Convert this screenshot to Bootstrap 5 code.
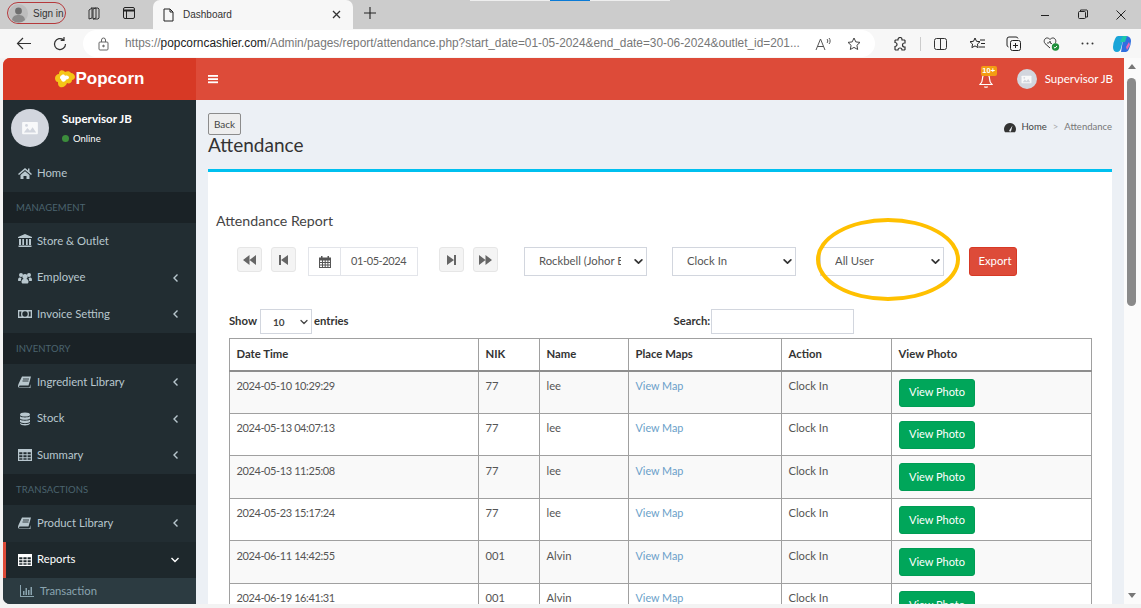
<!DOCTYPE html>
<html lang="en">
<head>
<meta charset="utf-8">
<title>Dashboard</title>
<link href="https://cdn.jsdelivr.net/npm/bootstrap@5.3.0/dist/css/bootstrap.min.css" rel="stylesheet">
<style>
html,body{height:608px;overflow:hidden}
body{font-family:"Lato","Liberation Sans",sans-serif;font-size:11.5px;color:#444;background:#f3f3f3;width:1141px;position:relative}
svg{display:block;flex:none}
/* browser chrome */
.tabstrip{height:29px;background:#ccc;display:flex;align-items:flex-start;font-family:"Liberation Sans",sans-serif;color:#333}
.signin{margin:2px 0 0 7px;width:59px;height:22px;border:1px solid #b5393c;border-radius:11px;display:flex;align-items:center;gap:5px;padding-left:1px;font-size:10px;white-space:nowrap}
.stripic{margin:6px 0 0 20px}
.stripic2{margin:6px 0 0 21px}
.tabitem{margin-left:17px;width:200px;height:29px;background:#f7f7f7;border-radius:7px 7px 0 0;display:flex;align-items:center;padding:0 12px 0 10px;font-size:10px;gap:9px}
.tabplus{margin:7px 0 0 11px}
.winctl{margin-left:auto;display:flex;gap:27px;padding:8px 15px 0 0}
.toolbar{height:29px;background:#f7f7f7;display:flex;align-items:center;font-family:"Liberation Sans",sans-serif}
.addr{margin-left:16px;width:792px;height:27px;background:#fff;border-radius:14px;display:flex;align-items:center;padding:0 14px 0 15px;font-size:11.86px;color:#777;white-space:nowrap}
.addr b{font-weight:400;color:#222}
.tool-right{display:flex;align-items:center;gap:21px;margin-left:18px}
.sep{width:1px;height:14px;background:#ccc;margin:0 -8.500px}
/* app */
.appwin{height:546px;margin-left:3px;display:flex;flex-direction:column;overflow:hidden;border-radius:7px 0 0 7px;position:relative}
.apphead{height:42px;display:flex;flex:none;background:#dd4b39;color:#fff;margin-right:17px}
.logo{width:193px;background:#d73925;display:flex;align-items:center;justify-content:center;font:700 17px "Liberation Sans",sans-serif;gap:0}
.burger{margin:16px 0 0 12px}
.headr{margin-left:auto;display:flex;align-items:center;padding-right:11px;position:relative;font-size:11.5px}
.bellwrap{position:relative;width:18px;height:42px;margin-right:20px}
.bellwrap svg{position:absolute;left:0;top:15px}
.bellbadge{position:absolute;left:2px;top:8px;width:16px;height:10px;background:#f39c12;border-radius:2px;font:700 7.5px/10px "Liberation Sans",sans-serif;text-align:center}
.av{border-radius:50%;background:#d2d6de;display:flex;align-items:center;justify-content:center}
.appbody{flex:1;display:flex;min-height:0}
/* sidebar */
.side{width:193px;flex:none;background:#222d32;color:#b8c7ce;font-size:11.3px}
.upanel{height:55px;display:flex;padding:9px 0 0 8px;color:#fff}
.upanel-t{margin-left:13px;font-weight:700;font-size:11.6px;line-height:1.2;padding-top:3px}
.upanel-t small{display:flex;align-items:center;gap:4px;font-size:9.5px;margin-top:7px;font-weight:400}
.dot{width:7px;height:7px;border-radius:50%;background:#3c8d3c}
.sitem{height:36.7px;display:flex;align-items:center;padding:0 16px 0 15px;gap:5px}
.sitem svg.i{width:14px;height:14px}
.sitem .chev{margin-left:auto}
.shead{height:31px;background:#1a2226;color:#4b646f;font-size:9.5px;display:flex;align-items:center;padding:1px 0 0 13px;letter-spacing:.1px}
.sactive{background:#1e282c;color:#fff;border-left:3px solid #dd4b39;padding-left:12px}
.ssub{height:26px;background:#2c3b41;color:#8aa4af;display:flex;align-items:center;gap:6px;padding-left:17px}
/* content */
.maincol{flex:1;background:#ecf0f5;padding:0 12px;min-width:0}
.pagehead{height:69px;position:relative;padding-top:13px}
.backbtn{display:block;height:22px;width:33px;padding:0;font-size:10px;line-height:19px;border:1px solid #8c8c8c;border-radius:2px;background:#eee;color:#444}
.pagetitle{font-size:19px;font-weight:400;line-height:19px;margin:0;color:#333}
.crumbs{position:absolute;right:0;top:20px;display:flex;align-items:center;gap:5px;font-size:9.5px;color:#444}
.crumbs .c2{color:#777}.crumbs .c3{color:#aaa;margin:0 1px}
.panelbox{background:#fff;border-top:3px solid #00c0ef;height:440px;padding:0;overflow:hidden}
.rtitle{font-size:14.2px;line-height:18px;margin:0;font-weight:400;padding:40px 0 0 8px;color:#444}
.ctlrow{display:flex;align-items:flex-start;gap:9px;margin:17px 0 0 29px}
.ctlbtn{width:25px;height:25px;background:#f4f4f4;border:1px solid #e6e6e6;border-radius:3px;display:flex;align-items:center;justify-content:center;padding:0}
.dategrp{display:flex;width:110px;height:29px;margin:0 12px 0 3px;border:1px solid #e3e5ea;color:#555}
.dategrp .cal{width:32px;border-right:1px solid #e3e5ea;display:flex;align-items:center;justify-content:center}
.dategrp .val{flex:1;display:flex;align-items:center;padding-left:10px}
.ts{font-size:11px;letter-spacing:-.4px}
.pickbox.form-select{height:29px;border-radius:0;border-color:#d2d6de;font-size:11.3px;color:#555;padding:0 25px 0 14px;background-image:url("data:image/svg+xml,%3csvg xmlns='http://www.w3.org/2000/svg' viewBox='0 0 16 16'%3e%3cpath fill='none' stroke='%23333' stroke-linecap='round' stroke-linejoin='round' stroke-width='3' d='m2 5 6 6 6-6'/%3e%3c/svg%3e");background-size:9px 9px;background-position:right 3px center;box-shadow:none;width:123px;margin-left:16px;flex:none}
.exportbtn{width:48px;height:29px;background:#dd4b39;color:#fff;border:1px solid #d73925;border-radius:3px;font-size:11.3px;margin-left:16px;padding:0 0 0 4px}
.dtrow{display:flex;align-items:center;margin:33px 0 0 21px;font-weight:700;font-size:11.3px;color:#333}
.lenbox.form-select{width:52px;height:25px;border-radius:0;border-color:#d2d6de;font-size:10px;font-weight:700;padding:2px 14px 0 12px;margin:0 2px 0 3px;background-image:url("data:image/svg+xml,%3csvg xmlns='http://www.w3.org/2000/svg' viewBox='0 0 16 16'%3e%3cpath fill='none' stroke='%23444' stroke-linecap='round' stroke-linejoin='round' stroke-width='2.500' d='m2 5 6 6 6-6'/%3e%3c/svg%3e");background-size:8px 8px;background-position:right 3px center;color:#444}
.srchl{margin-left:325px}
.srchbox{width:143px;height:25px;border:1px solid #d2d6de;margin-left:1px}
.atable{width:862px;margin:4px 0 0 21px;table-layout:fixed;--bs-table-border-color:#a0a0a0;--bs-table-striped-bg:#f9f9f9;--bs-table-striped-color:#555;--bs-table-color:#555;font-size:11.2px}
.atable th{padding:0 6.500px;height:32px;vertical-align:middle;font-weight:700;color:#333;border-bottom:2px solid #8e8e8e;font-size:11.3px}
.atable td{padding:6.500px 6.500px 0;height:42.6px;vertical-align:top}
.atable td.pc{padding:7px 7px 0}
.atable a{color:#6a9fc9;text-decoration:none;font-size:10.8px}
.gbtn{width:76px;height:28px;background:#00a65a;color:#fff;border:1px solid #009d55;border-radius:3px;font-size:11px;padding:0;display:block}
.c1{width:249px}.c2w{width:61px}.c3w{width:89px}.c4w{width:153px}.c5w{width:110px}.c6w{width:200px}
.vsb{position:absolute;right:0;top:0;width:17px;bottom:0;background:#fbfbfb}
.vsb i{position:absolute;left:3px;top:20px;width:9px;height:228px;border-radius:5px;background:#8a8a8a}
.vsb .up,.vsb .dn{position:absolute;left:4px;width:0;height:0;border:4px solid transparent}
.vsb .up{top:6px;border-bottom:5px solid #777;border-top:0}
.vsb .dn{bottom:6px;border-top:5px solid #777;border-bottom:0}
.callout{position:absolute;left:816px;top:218px;width:144px;height:83px;border:4px solid #ffc000;border-radius:50%;pointer-events:none}
.topline{position:absolute;top:0;height:1px;left:470px;width:200px;background:linear-gradient(90deg,#eee 0 40%,#0a7ad6 40% 60%,#eee 60%)}
</style>
</head>
<body>
<svg class="d-none" xmlns="http://www.w3.org/2000/svg">
<symbol id="pic" viewBox="0 0 20 16"><rect x="1" y="1" width="18" height="14" rx="1" fill="#fff" opacity=".85"/><path d="M3 13l4-5 3 3 3-4 4 6z" fill="#d2d6de"/><circle cx="6" cy="5" r="1.6" fill="#d2d6de"/></symbol>
<symbol id="chevl" viewBox="0 0 8 10"><path d="M5.500 1.500L2 5l3.500 3.500" fill="none" stroke="currentColor" stroke-width="1.400"/></symbol>
<symbol id="book" viewBox="0 0 14 14"><path d="M4 1.500h9l-2.500 9H2.500C1.400 10.500 1 11 1 11.500S1.500 12.500 2.500 12.500h9l1-3.500v4H2.500C1 13 0 12.300 0 11c0-.5.2-1 .5-2z" fill="currentColor"/><path d="M5 4h6M4.500 6h6" stroke="#222d32" stroke-width=".9"/></symbol>
<symbol id="tbl" viewBox="0 0 14 12"><path fill-rule="evenodd" d="M0 0h14v12H0zM1.200 3.200v2h3.200v-2zm4.200 0v2h3.200v-2zm4.200 0v2h3.200v-2zM1.200 6.200v2h3.200v-2zm4.200 0v2h3.200v-2zm4.200 0v2h3.200v-2zM1.200 9.200v1.600h3.200V9.200zm4.200 0v1.600h3.200V9.200zm4.200 0v1.600h3.200V9.200z" fill="currentColor"/></symbol>
</svg>
<div class="topline"></div>

<div class="tabstrip">
  <div class="signin">
    <svg width="19" height="19" viewBox="0 0 19 19"><circle cx="9.500" cy="9.500" r="9.500" fill="#bdbdbd"/><circle cx="9.500" cy="7" r="3.400" fill="#6e6e6e"/><path d="M3 16c.5-4 3-5 6.500-5s6 1 6.500 5a9.500 9.500 0 0 1-13 0z" fill="#8a8a8a"/></svg>
    <span>Sign in</span>
  </div>
  <svg class="stripic" width="15" height="15" viewBox="0 0 15 15" fill="none" stroke="#333"><path d="M5 2h7l1 1v9l-1 1H7M3 4l3-2v10l-3 1zM7 3l3-1v10l-3 1z"/></svg>
  <svg class="stripic2" width="14" height="14" viewBox="0 0 14 14" fill="none" stroke="#222"><rect x="1.500" y="1.500" width="11" height="11" rx="1.500"/><path d="M1.500 4.500h11" stroke-width="2"/><path d="M4.500 4.500v8"/></svg>
  <div class="tabitem">
    <svg width="11" height="14" viewBox="0 0 11 14" fill="none" stroke="#222"><path d="M1 1h6l3 3v9H1zM7 1v3h3"/></svg>
    <span>Dashboard</span>
    <svg class="ms-auto" width="9" height="9" viewBox="0 0 9 9" stroke="#333" stroke-width="1.300"><path d="M1 1l7 7M8 1L1 8"/></svg>
  </div>
  <svg class="tabplus" width="12" height="12" viewBox="0 0 12 12" stroke="#222" stroke-width="1.100"><path d="M6 0v12M0 6h12"/></svg>
  <div class="winctl">
    <svg width="10" height="14" viewBox="0 0 10 14" stroke="#222"><path d="M1 7.500h8"/></svg>
    <svg width="12" height="14" viewBox="0 0 12 14" fill="none" stroke="#222"><rect x="1.500" y="3.500" width="7" height="7" rx="1"/><path d="M3.500 3V2h6.500l.5.500V9h-1.500"/></svg>
    <svg width="10" height="14" viewBox="0 0 10 14" stroke="#222"><path d="M.5 2.500l9 9M9.500 2.500l-9 9"/></svg>
  </div>
</div>

<div class="toolbar">
  <svg class="ms-3" width="15" height="13" viewBox="0 0 15 13" fill="none" stroke="#333" stroke-width="1.200"><path d="M15 6.500H1.500M7 1L1.500 6.500 7 12"/></svg>
  <svg style="margin-left:22px" width="14" height="14" viewBox="0 0 14 14" fill="none" stroke="#333" stroke-width="1.200"><path d="M12.500 7A5.500 5.500 0 1 1 10.500 2.800M11 0v3.300H7.700"/></svg>
  <div class="addr">
    <svg width="11" height="14" viewBox="0 0 11 14" fill="none" stroke="#666"><rect x="1" y="5" width="9" height="8" rx="1"/><path d="M3.500 5V3a2 2 0 0 1 4 0v2"/><circle cx="5.500" cy="9" r=".8" fill="#666"/></svg>
    <span class="ms-3">https://<b>popcorncashier.com</b>/Admin/pages/report/attendance.php?start_date=01-05-2024&amp;end_date=30-06-2024&amp;outlet_id=201...</span>
    <span class="ms-auto" style="display:flex;gap:15px;align-items:center">
      <svg width="17" height="14" viewBox="0 0 17 14" fill="none" stroke="#555"><path d="M1 13L5.500 2 10 13M2.500 9.500h6M12 2c1 1 1 3 0 4M14 1c1.500 1.500 1.500 4.500 0 6"/></svg>
      <svg width="14" height="14" viewBox="0 0 14 14" fill="none" stroke="#444"><path d="M7 1l1.800 3.900 4.200.5-3.100 2.900.8 4.200L7 10.400 3.300 12.500l.8-4.200L1 5.400l4.200-.5z"/></svg>
    </span>
  </div>
  <div class="tool-right">
    <svg width="14" height="14" viewBox="0 0 14 14" fill="none" stroke="#333" stroke-width="1.200"><path d="M5 2.500a2 2 0 0 1 4 0V3h2.500l.5.500V6h-.5a2 2 0 0 0 0 4h.5v2.500l-.5.500H9a2 2 0 0 0-4 0H2.500L2 12.500V9.500a2 2 0 0 0 0-4V3.500L2.500 3H5z"/></svg>
    <span class="sep"></span>
    <svg width="15" height="14" viewBox="0 0 15 14" fill="none" stroke="#333"><rect x="1.500" y="1.500" width="12" height="11" rx="2"/><path d="M7.500 1.500v11"/></svg>
    <svg width="16" height="14" viewBox="0 0 16 14" fill="none" stroke="#222"><path d="M6 1l1.500 3.300 3.500.4-2.600 2.400.7 3.500L6 8.900 2.900 10.600l.7-3.500L1 4.700l3.500-.4zM11 3h5M12 6.500h4M10 10h6"/></svg>
    <svg width="16" height="15" viewBox="0 0 16 15" fill="none" stroke="#222"><rect x="4.500" y="4.500" width="10" height="10" rx="2"/><path d="M9.500 7v5M7 9.500h5M12 2.500A2 2 0 0 0 10 1H3a2 2 0 0 0-2 2v6a2 2 0 0 0 1.500 2"/></svg>
    <svg width="17" height="15" viewBox="0 0 17 15"><path d="M7 12L2 7.500C0 5 2 1.500 4.500 2 6 2.200 7 3.500 7 3.500S8 2.200 9.500 2C12 1.500 14 5 12 7.500" fill="none" stroke="#333"/><path d="M4 7h2l1-2 1 3 1-1" fill="none" stroke="#333" stroke-width=".8"/><circle cx="12.500" cy="11" r="3.700" fill="#1f8f3a"/><path d="M10.800 11l1.200 1.200 2-2.200" fill="none" stroke="#fff"/></svg>
    <svg width="13" height="3" viewBox="0 0 13 3" fill="#333"><circle cx="1.500" cy="1.500" r="1"/><circle cx="6.500" cy="1.500" r="1"/><circle cx="11.500" cy="1.500" r="1"/></svg>
    <svg style="margin-left:-3px" width="20" height="20" viewBox="0 0 20 20"><path d="M6 2h6l-3 12q-1 4-4 4-4 0-4-5 0-4 2-8 1-3 3-3z" fill="#1aa5d8"/><path d="M9 18h5q2 0 3-3 2-5 2-8 0-4-4-5-3 0-4 4z" fill="#2f6fe0"/><path d="M11 2h4l-2 6h-5z" fill="#1cc7a8"/><path d="M14 13l3-5 1 3-3 5z" fill="#e96ab0"/></svg>
  </div>
</div>

<div class="appwin">
  <div class="apphead">
    <div class="logo">
      <svg width="21" height="19" viewBox="0 0 21 19"><path d="M5 1c2-1.500 4 0 5 1 2-1 5-1 6 1 2 0 4 2 4 4s-2 3-3 3c0 3-3 4-5 3-1 3-4 5-7 4-2-1-2-3-2-5-2 0-3-2-3-4s2-4 4-4c0-1 0-2 1-3z" fill="#f5c518"/><path d="M7 5c1.500-1 3 0 3 1 1.500-1 4 0 4 1.500s-2 2-3 2c0 1.500-2 3-3.500 2S6 9.500 6 9C4.500 9 4.500 6 7 5z" fill="#fff"/></svg>
      <span>Popcorn</span>
    </div>
    <svg class="burger" width="10" height="10" viewBox="0 0 10 10" fill="#fff"><rect y="1" width="10" height="1.800"/><rect y="4.200" width="10" height="1.800"/><rect y="7.400" width="10" height="1.800"/></svg>
    <div class="headr">
      <div class="bellwrap">
        <svg width="14" height="16" viewBox="0 0 14 16" fill="none" stroke="#fff" stroke-width="1.200"><path d="M7 1.500c-2.500 0-3.500 2-3.500 4 0 3-1 4.500-2.500 6h12c-1.500-1.500-2.500-3-2.500-6 0-2-1-4-3.500-4zM5.500 13.500c.3 1 2.700 1 3 0"/></svg>
        <span class="bellbadge">10+</span>
      </div>
      <span class="av" style="width:20px;height:20px"><svg width="11" height="9"><use href="#pic"/></svg></span>
      <span class="ms-2">Supervisor JB</span>
    </div>
  </div>
  <div class="appbody">
    <aside class="side">
      <div class="upanel">
        <span class="av" style="width:38px;height:38px"><svg width="18" height="14"><use href="#pic"/></svg></span>
        <div class="upanel-t">Supervisor JB<small><span class="dot"></span>Online</small></div>
      </div>
      <div class="sitem"><svg class="i" viewBox="0 0 14 14" fill="currentColor"><path d="M7 2L0 8l1 1 6-5 6 5 1-1-2.500-2.200V2.500H10v2zM2.500 9L7 5.300 11.500 9v4H8.500V10h-3v3h-3z"/></svg>Home</div>
      <div class="shead">MANAGEMENT</div>
      <div class="sitem"><svg class="i" viewBox="0 0 14 14" fill="currentColor"><path d="M7 0l7 3v1H0V3zM1 5h2v6H1zm3.300 0h1.700v6H4.300zM8 5h1.700v6H8zm3 0h2v6h-2zM.5 11.500h13V13H.5z"/></svg>Store &amp; Outlet</div>
      <div class="sitem"><svg class="i" viewBox="0 0 14 14" fill="currentColor"><circle cx="3" cy="4" r="2"/><circle cx="11" cy="4" r="2"/><circle cx="7" cy="5.500" r="2.600"/><path d="M0 9c0-2 1-2.500 2-2.500L3.500 7c-.5 1-.7 2-.7 3H1C.3 10 0 9.600 0 9zm14 0c0-2-1-2.500-2-2.500L10.500 7c.5 1 .7 2 .7 3H13c.7 0 1-.4 1-1zM3.500 10.500C3.500 9 4.500 8 5.500 8h3c1 0 2 1 2 2.500s-.5 2-1.500 2H5c-1 0-1.500-.5-1.500-2z"/></svg>Employee<svg class="chev" width="8" height="10"><use href="#chevl"/></svg></div>
      <div class="sitem"><svg class="i" viewBox="0 0 14 14"><path fill-rule="evenodd" d="M0 3h14v8H0zm7 1.300a2.700 2.700 0 1 0 0 5.400 2.700 2.700 0 0 0 0-5.400zM1.300 4.500v5h2.200c-.6-1.500-.6-3.500 0-5zm11.400 0h-2.200c.6 1.500.6 3.500 0 5h2.200z" fill="currentColor"/></svg>Invoice Setting<svg class="chev" width="8" height="10"><use href="#chevl"/></svg></div>
      <div class="shead">INVENTORY</div>
      <div class="sitem"><svg class="i"><use href="#book"/></svg>Ingredient Library<svg class="chev" width="8" height="10"><use href="#chevl"/></svg></div>
      <div class="sitem"><svg class="i" viewBox="0 0 14 14" fill="currentColor"><ellipse cx="7" cy="2.500" rx="5" ry="2"/><path d="M2 4.200c1 1.600 9 1.600 10 0V6.500c-1 1.800-9 1.800-10 0zM2 7.500c1 1.600 9 1.600 10 0v2.300c-1 1.800-9 1.800-10 0zM2 10.800c1 1.600 9 1.600 10 0v.7c-.5 2.600-9.500 2.600-10 0z"/></svg>Stock<svg class="chev" width="8" height="10"><use href="#chevl"/></svg></div>
      <div class="sitem"><svg class="i"><use href="#tbl"/></svg>Summary<svg class="chev" width="8" height="10"><use href="#chevl"/></svg></div>
      <div class="shead">TRANSACTIONS</div>
      <div class="sitem"><svg class="i"><use href="#book"/></svg>Product Library<svg class="chev" width="8" height="10"><use href="#chevl"/></svg></div>
      <div class="sitem sactive"><svg class="i"><use href="#tbl"/></svg>Reports<svg class="chev" width="10" height="8" viewBox="0 0 10 8" fill="none" stroke="#fff" stroke-width="1.400"><path d="M1.500 2L5 5.500 8.500 2"/></svg></div>
      <div class="ssub"><svg width="14" height="12" viewBox="0 0 14 12" fill="currentColor"><path d="M0 0h1v11h13v1H0zM3 6h1.500v4H3zm2.500-3H7v7H5.500zM8 5h1.500v5H8zm2.500-3H12v8h-1.500z"/></svg>Transaction</div>
    </aside>
    <main class="maincol">
      <div class="pagehead">
        <button class="backbtn" type="button">Back</button>
        <h1 class="pagetitle">Attendance</h1>
        <div class="crumbs">
          <svg width="12" height="11" viewBox="0 0 12 11" fill="#333"><path fill-rule="evenodd" d="M6 1a6 6 0 0 0-5.300 8.800l.3.500h10l.3-.5A6 6 0 0 0 6 1zM5.200 8.500L8.500 3.500 7 9.200a1 1 0 0 1-1.800-.7z"/></svg>
          <span>Home</span><span class="c3">&gt;</span><span class="c2">Attendance</span>
        </div>
      </div>
      <section class="panelbox">
        <h2 class="rtitle">Attendance Report</h2>
        <div class="ctlrow">
          <button class="ctlbtn" type="button"><svg width="13" height="10" viewBox="0 0 13 10" fill="#666"><path d="M6.500 0v10L0 5zM13 0v10L6.500 5z"/></svg></button>
          <button class="ctlbtn" type="button"><svg width="9" height="10" viewBox="0 0 9 10" fill="#666"><path d="M0 0h2v10H0zM9 0v10L2 5z"/></svg></button>
          <div class="dategrp">
            <span class="cal"><svg width="12" height="12" viewBox="0 0 12 12" fill="#555"><path fill-rule="evenodd" d="M0 1.500h2V0h1.500v1.500h5V0H10v1.500h2V12H0zM1 4.500v1.500h2V4.500zm3 0v1.500h1.700V4.500zm2.700 0v1.500h1.700V4.500zm2.700 0v1.500H11V4.500zM1 7v1.500h2V7zm3 0v1.500h1.700V7zm2.700 0v1.500h1.700V7zm2.700 0v1.500H11V7zM1 9.500V11h2V9.500zm3 0V11h1.700V9.500zm2.700 0V11h1.700V9.500zm2.700 0V11H11V9.500z"/></svg></span>
            <span class="val ts">01-05-2024</span>
          </div>
          <button class="ctlbtn" type="button"><svg width="9" height="10" viewBox="0 0 9 10" fill="#666"><path d="M9 0H7v10h2zM0 0v10l7-5z"/></svg></button>
          <button class="ctlbtn" type="button"><svg width="13" height="10" viewBox="0 0 13 10" fill="#666"><path d="M0 0v10l6.500-5zM6.500 0v10L13 5z"/></svg></button>
          <select class="form-select pickbox" style="margin-left:17px"><option>Rockbell (Johor Bahru)</option></select>
          <select class="form-select pickbox" style="width:124px"><option>Clock In</option></select>
          <select class="form-select pickbox" style="width:124px;margin-left:15px"><option>All User</option></select>
          <button class="exportbtn" type="button">Export</button>
        </div>
        <div class="dtrow">
          <span>Show</span>
          <select class="form-select lenbox"><option>10</option></select>
          <span>entries</span>
          <span class="srchl">Search:</span>
          <input class="srchbox" type="text" aria-label="Search">
        </div>
        <table class="table table-bordered table-striped atable">
          <colgroup><col class="c1"><col class="c2w"><col class="c3w"><col class="c4w"><col class="c5w"><col class="c6w"></colgroup>
          <thead><tr><th>Date Time</th><th>NIK</th><th>Name</th><th>Place Maps</th><th>Action</th><th>View Photo</th></tr></thead>
          <tbody>
            <tr><td class="ts">2024-05-10 10:29:29</td><td>77</td><td>lee</td><td><a href="#">View Map</a></td><td>Clock In</td><td class="pc"><button class="gbtn" type="button">View Photo</button></td></tr>
            <tr><td class="ts">2024-05-13 04:07:13</td><td>77</td><td>lee</td><td><a href="#">View Map</a></td><td>Clock In</td><td class="pc"><button class="gbtn" type="button">View Photo</button></td></tr>
            <tr><td class="ts">2024-05-13 11:25:08</td><td>77</td><td>lee</td><td><a href="#">View Map</a></td><td>Clock In</td><td class="pc"><button class="gbtn" type="button">View Photo</button></td></tr>
            <tr><td class="ts">2024-05-23 15:17:24</td><td>77</td><td>lee</td><td><a href="#">View Map</a></td><td>Clock In</td><td class="pc"><button class="gbtn" type="button">View Photo</button></td></tr>
            <tr><td class="ts">2024-06-11 14:42:55</td><td>001</td><td>Alvin</td><td><a href="#">View Map</a></td><td>Clock In</td><td class="pc"><button class="gbtn" type="button">View Photo</button></td></tr>
            <tr><td class="ts">2024-06-19 16:41:31</td><td>001</td><td>Alvin</td><td><a href="#">View Map</a></td><td>Clock In</td><td class="pc"><button class="gbtn" type="button">View Photo</button></td></tr>
          </tbody>
        </table>
      </section>
    </main>
    <div style="width:17px;flex:none"></div>
  </div>
  <div class="vsb"><span class="up"></span><i></i><span class="dn"></span></div>
</div>
<div class="callout"></div>
<script src="https://cdn.jsdelivr.net/npm/bootstrap@5.3.0/dist/js/bootstrap.bundle.min.js"></script>
</body>
</html>
